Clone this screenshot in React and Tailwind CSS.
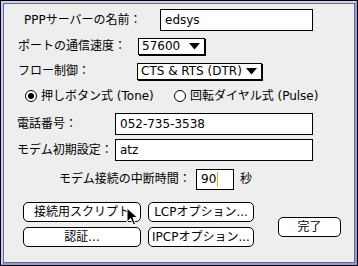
import React from "react";

const font = { fontFamily: '"DejaVu Sans", "Noto Sans CJK JP", sans-serif' };

function Field({ left, width, value }) {
  return (
    <div
      className="flex h-[22px] items-center whitespace-nowrap border border-black bg-white pl-[4px] text-[12px]"
      style={{ marginLeft: left, width }}
    >
      <span>{value}</span>
    </div>
  );
}

function Popup({ left, width, value }) {
  return (
    <div
      className="flex h-[17px] items-center justify-between whitespace-nowrap border border-black bg-white pl-[3px] pr-[4px] text-[12px] shadow-[1px_1px_0_#000]"
      style={{ marginLeft: left, width }}
    >
      <span>{value}</span>
      <svg width="11" height="7" viewBox="0 0 11 7">
        <path d="M0 0 H11 L5.5 6.5 Z" fill="#000" />
      </svg>
    </div>
  );
}

function Radio({ on, label }) {
  return (
    <div className="flex items-center whitespace-nowrap">
      <span className="flex h-[12px] w-[12px] items-center justify-center rounded-full border border-black bg-white">
        {on ? <span className="h-[6px] w-[6px] rounded-full bg-black" /> : null}
      </span>
      <span className="ml-[4px] text-[12px]">{label}</span>
    </div>
  );
}

function Button({ children, className }) {
  return (
    <div
      className={`flex items-center justify-center whitespace-nowrap rounded-[5px] border border-black bg-white text-[12px] ${className}`}
    >
      {children}
    </div>
  );
}

export default function App() {
  return (
    <div className="h-[266px] w-[358px] overflow-hidden border border-black bg-[#eeeeee]" style={font}>
      <div className="h-full w-full border-2 border-t-[#ccccff] border-l-[#ccccff] border-b-[#9999cc] border-r-[#9999cc]">
        <div className="relative h-full w-full whitespace-nowrap border border-[#666699] bg-[#eeeeee] text-black">
          {/* row 1 */}
          <div className="mt-[5px] flex h-[22px] items-center">
            <span className="ml-[20px] w-[135px] text-[12px]">PPPサーバーの名前：</span>
            <Field left={1} width={153} value="edsys" />
          </div>
          {/* row 2 */}
          <div className="mt-[6px] flex h-[18px] items-center">
            <span className="ml-[14px] w-[120px] text-[12px]">ポートの通信速度：</span>
            <Popup left={0} width={67} value="57600" />
          </div>
          {/* row 3 */}
          <div className="mt-[7px] flex h-[18px] items-center">
            <span className="ml-[14px] w-[119px] text-[12px]">フロー制御：</span>
            <Popup left={0} width={125} value="CTS & RTS (DTR)" />
          </div>
          {/* row 4 */}
          <div className="mt-[8px] flex h-[16px] items-center">
            <div className="ml-[21px] w-[149px]">
              <Radio on label="押しボタン式 (Tone)" />
            </div>
            <Radio label="回転ダイヤル式 (Pulse)" />
          </div>
          {/* row 5 */}
          <div className="mt-[9px] flex h-[22px] items-center">
            <span className="ml-[13px] w-[98px] text-[12px]">電話番号：</span>
            <Field left={0} width={198} value="052-735-3538" />
          </div>
          {/* row 6 */}
          <div className="mt-[4px] flex h-[22px] items-center">
            <span className="ml-[13px] w-[98px] text-[12px]">モデム初期設定：</span>
            <Field left={0} width={198} value="atz" />
          </div>
          {/* row 7 */}
          <div className="mt-[8px] flex h-[20px] items-center">
            <span className="ml-[55px] w-[137px] text-[12px]">モデム接続の中断時間：</span>
            <div className="flex h-[21px] w-[38px] items-center border border-black bg-white pl-[4px] text-[12px]">
              <span>90</span>
              <span className="ml-[1px] h-[15px] w-[1px] bg-[#f5a300]" />
            </div>
            <span className="ml-[6px] text-[12px]">秒</span>
          </div>
          {/* buttons */}
          <div className="mt-[13px] flex">
            <div className="ml-[19px] flex flex-col gap-[5px]">
              <Button className="h-[20px] w-[118px]">接続用スクリプト</Button>
              <Button className="h-[20px] w-[118px]">認証...</Button>
            </div>
            <div className="ml-[7px] flex flex-col gap-[5px]">
              <Button className="h-[20px] w-[106px]">LCPオプション...</Button>
              <Button className="h-[20px] w-[106px]">IPCPオプション...</Button>
            </div>
            <div className="ml-[24px] mt-[15px]">
              <Button className="h-[20px] w-[63px]">完了</Button>
            </div>
          </div>
          {/* mouse cursor */}
          <svg className="absolute left-[122px] top-[203px]" width="14" height="20" viewBox="0 0 14 20">
            <path
              d="M1 1 L1 15 L4.5 11.5 L7.5 18 L9.5 17 L7 10.5 L11.5 10.5 Z"
              fill="#000"
              stroke="#fff"
              strokeWidth="1"
            />
          </svg>
        </div>
      </div>
    </div>
  );
}
